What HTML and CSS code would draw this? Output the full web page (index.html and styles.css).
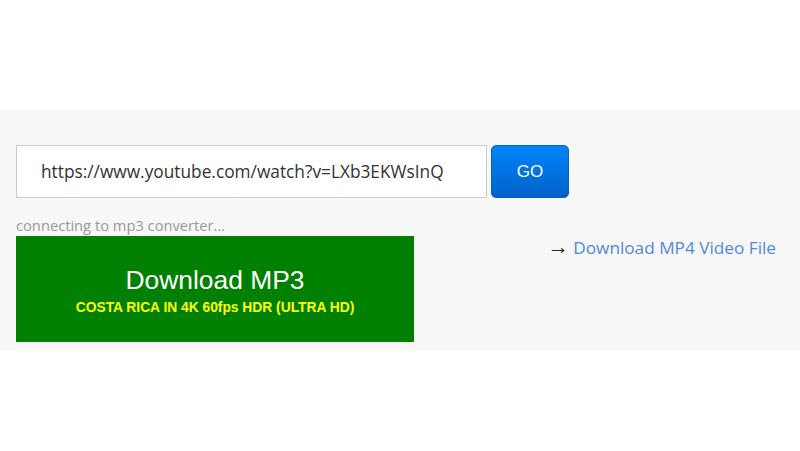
FILE: index.html
```html
<!DOCTYPE html>
<html lang="en">
<head>
  <meta charset="UTF-8"/>
  <meta name="viewport" content="width=device-width, initial-scale=1.0"/>
  <title>YouTube to MP3</title>
  <link rel="stylesheet" href="styles.css">
</head>
<body>
  <div class="band">
    <form class="search" onsubmit="return false">
      <input type="text" class="url-input" value="https://www.youtube.com/watch?v=LXb3EKWsInQ"/>
      <button type="submit" class="go-btn">GO</button>
    </form>

    <div class="result">
      <div class="mp3-col">
        <div class="status">connecting to mp3 converter...</div>
        <a href="#" class="mp3-box">
          <span class="mp3-title">Download MP3</span>
          <span class="mp3-name">COSTA RICA IN 4K 60fps HDR (ULTRA HD)</span>
        </a>
      </div>
      <div class="mp4-link">
        <span class="arrow">&rarr;</span> <a href="#">Download MP4 Video File</a>
      </div>
    </div>
  </div>
</body>
</html>
```

FILE: styles.css
```css
* {
  box-sizing: border-box;
}

body {
  margin: 0;
  background: #fff;
  font-family: 'Open Sans', sans-serif;
}

.band {
  margin-top: 110px;
  background: #f7f7f7;
  padding: 35px 24px 8px 16px;
}

.search {
  display: flex;
  gap: 4px;
  margin: 0;
}

.url-input {
  width: 471px;
  height: 53px;
  border: 1px solid #ccc;
  background: #fff;
  padding: 0 24px;
  font-family: 'Open Sans', sans-serif;
  font-size: 17.3px;
  color: #333;
  outline: none;
}

.go-btn {
  width: 78px;
  height: 53px;
  border: 1px solid #0062c4;
  border-radius: 5px;
  background: linear-gradient(#0084f7, #0062cb);
  color: #fff;
  font-family: 'Liberation Sans', Arial, sans-serif;
  font-size: 17px;
  cursor: pointer;
}

.result {
  display: flex;
  justify-content: space-between;
  align-items: flex-start;
}

.status {
  margin-top: 16px;
  height: 22px;
  font-size: 14.7px;
  line-height: 22px;
  color: #999;
}

.mp3-box {
  display: flex;
  flex-direction: column;
  align-items: center;
  width: 398px;
  height: 106px;
  padding-top: 27px;
  background: #008000;
  text-decoration: none;
  font-family: 'Liberation Sans', Arial, sans-serif;
}

.mp3-title {
  font-size: 26.4px;
  line-height: 34px;
  color: #fff;
}

.mp3-name {
  margin-top: 3px;
  font-size: 13.8px;
  font-weight: bold;
  color: #ff0;
}

.mp4-link {
  margin-top: 38px;
  font-size: 17.2px;
  line-height: 24px;
  color: #222;
}

/* thin long arrow before the mp4 link */
.arrow {
  font-family: 'Liberation Serif', serif;
  font-size: 21px;
  line-height: 1;
}

.mp4-link a {
  color: #4f8bd8;
  text-decoration: none;
}
```
